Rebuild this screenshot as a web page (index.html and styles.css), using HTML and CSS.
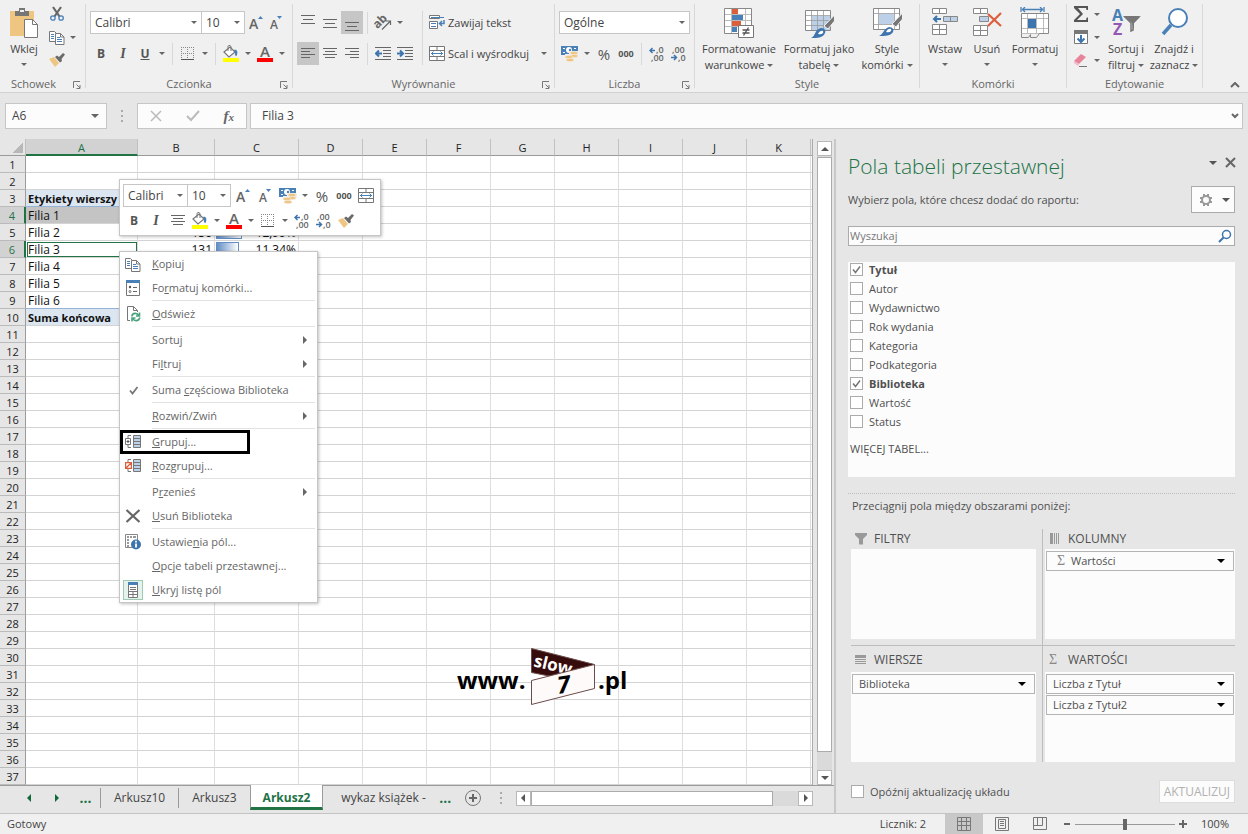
FILE: index.html
```html
<!DOCTYPE html>
<html lang="pl">
<head>
  <meta charset="UTF-8" />
  <meta name="viewport" content="width=device-width, initial-scale=1" />
  <title>Arkusz2 - tabela przestawna</title>
  <link rel="stylesheet" href="styles.css">
</head>
<body>

  <!-- Ikony -->
  <svg class="sprite" aria-hidden="true">
    <symbol id="i-paste" viewBox="0 0 30 32">
      <path fill="#efc681" d="M1 4h24v25H1z"/>
      <path fill="#777" d="M6 9V4h4V1h6v3h4v5z"/><path fill="#f0f0f0" d="M11 3h4v2h-4z"/>
      <path fill="#fff" stroke="#777" d="M15.500 12.500h8l5 5v13h-13z"/><path fill="none" stroke="#777" d="M23.500 12.500v5h5"/>
    </symbol>
    <symbol id="i-cut" viewBox="0 0 14 16">
      <path stroke="#666" stroke-width="2.200" fill="none" d="M3 1l6.500 9.500M11 1L4.500 10.500"/>
      <g fill="none" stroke="#4a80b8" stroke-width="1.300"><circle cx="2.900" cy="12" r="2.200"/><circle cx="11.100" cy="12" r="2.200"/></g>
    </symbol>
    <symbol id="i-copy" viewBox="0 0 16 15">
      <path fill="#fff" stroke="#777" d="M.5 1.500h5l3 3v7h-8z"/>
      <path stroke="#4a80b8" d="M2 4.500h3M2 6.500h3M2 8.500h3"/>
      <path fill="#fff" stroke="#777" d="M6.500 3.500h5l3.500 3.500v7.500H6.500z"/><path fill="none" stroke="#777" d="M11.500 3.500V7H15"/>
      <path stroke="#4a80b8" d="M8 7.500h3M8 9.500h5M8 11.500h5"/>
    </symbol>
    <symbol id="i-brush" viewBox="0 0 16 14">
      <path fill="#efc681" d="M0 6l5-2 5 6-4 4z"/>
      <path fill="#6a6a6a" d="M6 4l2-1.500 2 1.500L14 0l2 1.500-3.500 4.500L13 8l-2 1.500z"/>
    </symbol>
    <symbol id="i-border" viewBox="0 0 14 14">
      <path stroke="#888" stroke-dasharray="1 1" fill="none" d="M0 .5h14M0 6.500h14M.5 0v13M6.500 0v13M12.500 0v13"/><path stroke="#555" d="M0 12.500h13"/>
    </symbol>
    <symbol id="i-fill" viewBox="0 0 18 17">
      <path fill="#fff" stroke="#777" stroke-width="1.200" d="M2 7l6-5 5 5-6 5z"/><path fill="none" stroke="#777" d="M6 6V1.500C6 0 9 0 9 2v4"/>
      <path fill="#4a80b8" d="M12 5c3-1 4.500 2 2.500 6-1 0-2-1-1.500-3z"/><path fill="#ff0" d="M1 13h16v4H1z"/>
    </symbol>
    <symbol id="i-fontcolor" viewBox="0 0 18 17">
      <text x="9" y="12" text-anchor="middle" font-size="15" font-weight="600" fill="#666">A</text><path fill="#f00" d="M1 13h16v4H1z"/>
    </symbol>
    <symbol id="i-grow" viewBox="0 0 16 16">
      <text x="0" y="14" font-size="14" font-weight="600" fill="#666">A</text><path fill="#4a80b8" d="M9 4l2.500-3L14 4z"/>
    </symbol>
    <symbol id="i-shrink" viewBox="0 0 16 16">
      <text x="1" y="14" font-size="12" font-weight="600" fill="#666">A</text><path fill="#4a80b8" d="M8 1l2.500 3L13 1z"/>
    </symbol>
    <symbol id="i-vtop" viewBox="0 0 16 16"><path stroke="#666" d="M1 .5h14M3 4.500h10M1 8.500h14"/></symbol>
    <symbol id="i-vmid" viewBox="0 0 16 16"><path stroke="#666" d="M1 4.500h14M3 8.500h10M1 12.500h14"/></symbol>
    <symbol id="i-vbot" viewBox="0 0 16 16"><path stroke="#666" d="M1 7.500h14M3 11.500h10M1 15.500h14"/></symbol>
    <symbol id="i-left" viewBox="0 0 16 16"><path stroke="#666" d="M1 2.500h14M1 5.500h9M1 8.500h14M1 11.500h9"/></symbol>
    <symbol id="i-center" viewBox="0 0 16 16"><path stroke="#666" d="M1 2.500h14M3 5.500h10M1 8.500h14M3 11.500h10"/></symbol>
    <symbol id="i-right" viewBox="0 0 16 16"><path stroke="#666" d="M1 2.500h14M6 5.500h9M1 8.500h14M6 11.500h9"/></symbol>
    <symbol id="i-orient" viewBox="0 0 18 16">
      <text transform="rotate(-45 7 8)" x="0" y="10" font-size="12" font-weight="700" fill="#666">ab</text>
      <path stroke="#666" stroke-width="1.200" fill="none" d="M8 14.500l8-8M12 6H16.500v4"/>
    </symbol>
    <symbol id="i-outdent" viewBox="0 0 16 16">
      <path stroke="#666" d="M0 1.500h16M8 4.500h8M8 7.500h8M8 10.500h8M0 13.500h16"/><path stroke="#3d74ad" stroke-width="2" fill="none" d="M7 7.500H2M4 4.500l-3 3 3 3"/>
    </symbol>
    <symbol id="i-indent" viewBox="0 0 16 16">
      <path stroke="#666" d="M0 1.500h16M8 4.500h8M8 7.500h8M8 10.500h8M0 13.500h16"/><path stroke="#3d74ad" stroke-width="2" fill="none" d="M0 7.500h5M3 4.500l3 3-3 3"/>
    </symbol>
    <symbol id="i-wrap" viewBox="0 0 16 16">
      <path fill="#fff" stroke="#777" d="M.5.500h10v3H.5zM.5 6.500h8v7h-8z"/><path stroke="#4a80b8" d="M2 2.500h13M2 8.500h5M2 11.500h5"/>
      <path stroke="#4a80b8" stroke-width="1.500" fill="none" d="M15 5v3.500h-4M13 6l-2.500 2.500L13 11"/>
    </symbol>
    <symbol id="i-merge" viewBox="0 0 16 16">
      <path fill="#fff" stroke="#777" d="M.5.500h15v14H.5zM.5 4.500h15M.5 10.500h15M8 .5v4M8 10.500v4"/>
      <path stroke="#4a80b8" fill="none" d="M2 7.500h12M4.500 5.500l-2 2 2 2M11.500 5.500l2 2-2 2"/>
    </symbol>
    <symbol id="i-money" viewBox="0 0 18 17">
      <path fill="#4a80b8" d="M0 1h17v9H0z"/><path fill="#fff" d="M2 3h2v1H2zM13 3h2v1h-2zM2 7h2v1H2z"/><circle cx="8" cy="5" r="3" fill="#fff"/><circle cx="9" cy="5" r="1.200" fill="#4a80b8"/>
      <path fill="#f0f0f0" d="M8 6h10v5H8zM4 9h10v2H4z"/>
      <g fill="#efc681" stroke="#f0f0f0" stroke-width=".6"><ellipse cx="13" cy="8" rx="4" ry="1.700"/><ellipse cx="13" cy="11" rx="4" ry="1.700"/><ellipse cx="8" cy="12" rx="4" ry="1.700"/><ellipse cx="9" cy="15" rx="4" ry="1.700"/></g>
    </symbol>
    <symbol id="i-decinc" viewBox="0 0 16 16">
      <text x="7" y="7" font-size="9" font-weight="600" fill="#666">,0</text><text x="2" y="15" font-size="9" font-weight="600" fill="#666">,00</text>
      <path stroke="#3d74ad" stroke-width="1.500" fill="none" d="M6 4.500H1M3.500 2L1 4.500 3.500 7"/>
    </symbol>
    <symbol id="i-decdec" viewBox="0 0 16 16">
      <text x="1" y="7" font-size="9" font-weight="600" fill="#666">,00</text><text x="7" y="15" font-size="9" font-weight="600" fill="#666">,0</text>
      <path stroke="#3d74ad" stroke-width="1.500" fill="none" d="M0 11.500h5M3 9l2.500 2.500L3 14"/>
    </symbol>
    <symbol id="i-cond" viewBox="0 0 32 32">
      <path fill="#fff" stroke="#888" d="M1.500 1.500h27v25h-27z"/><path stroke="#bbb" d="M2 7.500h26M2 13.500h26M2 19.500h26M8.500 2v24M22.500 2v24"/>
      <path fill="#dc5f3d" d="M9 2h6v5H9zM9 14h9v5H9z"/><path fill="#4a80b8" d="M9 8h11v5H9zM9 20h5v5H9z"/>
      <path fill="#fff" stroke="#777" d="M15.500 18.500h15v12h-15z"/><path stroke="#555" stroke-width="1.300" fill="none" d="M19.500 23h7M19.500 26h7M25.500 20.500l-5 8"/>
    </symbol>
    <symbol id="i-astable" viewBox="0 0 32 32">
      <path fill="#fff" stroke="#888" d="M2.500 3.500h25v20h-25z"/><path fill="#bcd0e8" d="M9 9h18v14H9z"/>
      <path stroke="#999" stroke-width=".8" d="M3 8.500h24M3 13.500h24M3 18.500h24M8.500 4v19M14.500 4v19M20.500 4v19"/>
      <path fill="#777" stroke="#f0f0f0" d="M31.500 8v6L25 22l-4-3z"/><path fill="#3d74ad" d="M8 31c4-1 4-9 10-10 4 0 5 3 4 5-2 5-8 5-14 5z"/><path fill="#fff" d="M15 27c1-3 4-4 5-3 1 2-1 4-5 3z"/>
    </symbol>
    <symbol id="i-cellstyle" viewBox="0 0 32 32">
      <path fill="#fff" stroke="#888" d="M2.500 1.500h26v21h-26z"/><path stroke="#999" stroke-width=".8" d="M3 6.500h25M3 17.500h25M7.500 2v20M23.500 2v20"/><path fill="#bcd0e8" d="M8 7h15v10H8z"/>
      <path fill="#777" stroke="#f0f0f0" d="M31.500 6v6L25 20l-4-3z"/><path fill="#3d74ad" d="M8 29c4-1 5-8 10-9 4 0 5 3 4 5-2 4-8 4-14 4z"/><path fill="#fff" d="M15 25c1-3 4-4 5-3 1 2-1 4-5 3z"/>
    </symbol>
    <symbol id="i-insert" viewBox="0 0 32 32">
      <path fill="#fff" stroke="#888" d="M3.500 1.500h14v5h-14zM10.500 1.500v5M3.500 17.500h14v10h-14zM10.500 17.500v10M3.500 22.500h14"/>
      <path fill="#bcd0e8" stroke="#888" d="M14.500 9.500h14v5h-14zM21.500 9.500v5"/><path stroke="#3d74ad" stroke-width="2" fill="none" d="M12 12H5M8 9l-3 3 3 3"/>
    </symbol>
    <symbol id="i-delete" viewBox="0 0 32 32">
      <path fill="#fff" stroke="#888" d="M2.500 1.500h14v5h-14zM9.500 1.500v5M2.500 18.500h14v10h-14zM9.500 18.500v10M2.500 23.500h14"/>
      <path fill="#bcd0e8" stroke="#888" d="M8.500 9.500h9v5h-9z"/><path stroke="#dc5f3d" stroke-width="2.200" d="M17 7l13 12M30 6L17 19"/>
    </symbol>
    <symbol id="i-format" viewBox="0 0 32 32">
      <path stroke="#4a80b8" stroke-width="1.300" fill="none" d="M2 0v5M25 0v5M3 2.500h21M6 0L3.500 2.500 6 5M21 0l2.500 2.500L21 5"/>
      <path fill="#fff" stroke="#888" d="M2.500 6.500h27v20h-27z"/><path stroke="#aaa" stroke-width=".8" d="M3 11.500h26M3 21.500h26M8.500 7v19M17.500 7v19M24.500 7v19"/>
      <path fill="#3d74ad" d="M9 12h8v9H9z"/><path fill="#f0f0f0" stroke="#888" d="M2.500 26.500v4h7l2-3v3h6l3-4"/>
    </symbol>
    <symbol id="i-sum" viewBox="0 0 16 16"><path fill="#555" d="M1 0h14v4h-1.500L13 2H5l5 6-6 6h9l.8-2.500H15V16H1v-2l6-6-6-6z"/></symbol>
    <symbol id="i-filldown" viewBox="0 0 16 16">
      <path fill="#fff" stroke="#777" d="M1.500 1.500h13v13h-13z"/><path fill="#777" d="M1 1h14v4H1z"/><path stroke="#3d74ad" stroke-width="2" fill="none" d="M8 6v7M4.500 9.500L8 13l3.500-3.500"/>
    </symbol>
    <symbol id="i-eraser" viewBox="0 0 16 14"><path fill="#e8849a" d="M1 8l7-7 5 3-7 7z"/><path fill="#f3b9c5" d="M1 8l5 3-1 2-4-3z"/><path stroke="#777" d="M6 13.500h8"/></symbol>
    <symbol id="i-sort" viewBox="0 0 32 32">
      <text x="2" y="14" font-size="16" font-weight="700" fill="#4a80b8">A</text><text x="3" y="28" font-size="16" font-weight="700" fill="#9457b4">Z</text>
      <path fill="#f0f0f0" stroke="#777" stroke-width="1.500" d="M15 10h14l-6 6v7l-2 1v-8z"/><path fill="#777" d="M13 9h17l-6 7v8l-2-8z"/>
    </symbol>
    <symbol id="i-find" viewBox="0 0 32 32"><circle cx="20" cy="11" r="9" fill="#fff" stroke="#4a80b8" stroke-width="2"/><path stroke="#4a80b8" stroke-width="3.500" d="M13 18l-8 9"/></symbol>
    <symbol id="i-launch" viewBox="0 0 8 8"><path stroke="#777" fill="none" d="M.5 7V.5H7M7 4v3.500H3.500M3.500 3.500L7 7"/></symbol>
    <symbol id="i-search" viewBox="0 0 14 14"><circle cx="8.500" cy="5.500" r="4" fill="#fff" stroke="#3d74ad" stroke-width="1.500"/><path stroke="#3d74ad" stroke-width="2" d="M5.500 8.500L1 13"/></symbol>
    <symbol id="i-gear" viewBox="0 0 14 14"><circle cx="7" cy="7" r="4" fill="none" stroke="#999" stroke-width="2"/><path stroke="#999" stroke-width="2" d="M5 1v2.500M9 1v2.500M5 10.500V13M9 10.500V13M1 5h2.500M1 9h2.500M10.500 5H13M10.500 9H13"/></symbol>
    <symbol id="i-cellfmt" viewBox="0 0 16 16">
      <path fill="#fff" stroke="#777" d="M1.500 1.500h13v14h-13z"/><path fill="#4a80b8" d="M1 0h14v3H1z"/><circle cx="5" cy="7" r="1.200" fill="#555"/><circle cx="5" cy="11.500" r="1" fill="none" stroke="#555" stroke-width=".8"/><path stroke="#666" d="M8 7.500h4M8 11.500h4"/>
    </symbol>
    <symbol id="i-refresh" viewBox="0 0 16 16">
      <path fill="#fff" stroke="#777" d="M5 14.500H2.500V.5h6l4 4V6M8.500.5v4h4"/>
      <path fill="#fff" d="M6 7h9v8H6z"/>
      <path fill="none" stroke="#4ba47d" stroke-width="1.600" d="M6.800 10.500c.5-4 5.500-4 7-1M14.800 11.500c-1 4-5.500 4-7 1M14.500 6.500V10H11M7 15.500V12h3.500"/>
    </symbol>
    <symbol id="i-group" viewBox="0 0 16 14">
      <path fill="#fff" stroke="#777" d="M.5 3.500h5v6h-5zM3 3.500V.5h3M3 9.500v3h3"/><path stroke="#555" d="M1.500 6.500h3M3 5v3"/>
      <path fill="#bcd0e8" stroke="#777" d="M8.500.5h7v12h-7zM8.500 3.500h7M8.500 6.500h7M8.500 9.500h7"/>
    </symbol>
    <symbol id="i-ungroup" viewBox="0 0 16 14">
      <path fill="none" stroke="#777" d="M3 3V.5h3M3 10v2.500h3"/><path fill="#fff" stroke="#dc5f3d" stroke-width="1.300" d="M.6 3.600h5.800v5.800H.6zM1 9l5-5"/>
      <path fill="#bcd0e8" stroke="#777" d="M8.500.5h7v12h-7zM8.500 3.500h7M8.500 6.500h7M8.500 9.500h7"/>
    </symbol>
    <symbol id="i-cross" viewBox="0 0 16 14"><path stroke="#666" stroke-width="2.200" d="M1.500 1l13 12M14.500 1l-13 12"/></symbol>
    <symbol id="i-settings" viewBox="0 0 16 16">
      <path fill="#fff" stroke="#888" d="M.5.500h12v13H.5z"/><path stroke="#999" stroke-width="2" d="M2 3h2M5 3h2M8 3h3M2 6h2M2 9h2M2 12h2"/><circle cx="11" cy="10.500" r="5" fill="#3d74ad"/><path stroke="#fff" stroke-width="1.800" d="M11 9.500v4M11 6.800v1.600"/>
    </symbol>
    <symbol id="i-list" viewBox="0 0 16 16"><path fill="#fff" stroke="#777" d="M3.500.5h9v15h-9zM3.500 9.500h9M3.500 12.500h9M8 9.500v6"/><path fill="#4a80b8" d="M3 0h10v3H3z"/><path stroke="#777" d="M5 5.500h6M5 7.500h6"/></symbol>
    <symbol id="i-check" viewBox="0 0 12 12"><path fill="none" stroke="#777" stroke-width="1.800" d="M3 6.500l2.500 3 5-6.500"/></symbol>
    <symbol id="i-filter" viewBox="0 0 12 12"><path fill="#999" d="M0 0h12v2L8 6v5.500H4V6L0 2z"/></symbol>
    <symbol id="i-cols" viewBox="0 0 12 12"><path fill="#999" d="M1 0h3v11H1zM5 0h1v11H5zM7 0h1v11H7zM9 0h1v11H9z"/></symbol>
    <symbol id="i-rows" viewBox="0 0 12 12"><path fill="#999" d="M0 1h11v3H0zM0 5h11v1H0zM0 7h11v1H0zM0 9h11v1H0z"/></symbol>
  </svg>

  <!-- Wstążka -->
  <header class="ribbon">
    <section class="group clipboard">
      <div class="group-body">
        <button class="big paste"><svg width="30" height="32"><use href="#i-paste"/></svg><span>Wklej</span><i class="caret"></i></button>
        <div class="stack">
          <button class="tool" aria-label="Wytnij"><svg width="16" height="16"><use href="#i-cut"/></svg></button>
          <button class="tool" aria-label="Kopiuj"><svg width="16" height="15"><use href="#i-copy"/></svg><i class="caret"></i></button>
          <button class="tool" aria-label="Malarz formatów"><svg width="16" height="14"><use href="#i-brush"/></svg></button>
        </div>
      </div>
      <div class="group-name">Schowek<button class="launch" aria-label="Schowek - opcje"><svg width="8" height="8"><use href="#i-launch"/></svg></button></div>
    </section>

    <section class="group">
      <div class="group-body rows">
        <div class="row">
          <select class="combo font" aria-label="Czcionka"><option>Calibri</option></select>
          <select class="combo size" aria-label="Rozmiar czcionki"><option>10</option></select>
          <button class="btn grow" aria-label="Zwiększ"><svg width="16" height="16"><use href="#i-grow"/></svg></button>
          <button class="btn shrink" aria-label="Zmniejsz"><svg width="16" height="16"><use href="#i-shrink"/></svg></button>
        </div>
        <div class="row">
          <button class="btn"><b>B</b></button>
          <button class="btn"><em>I</em></button>
          <button class="btn"><u>U</u></button>
          <button class="drop" aria-label="Podkreślenie"><i class="caret"></i></button>
          <span class="vsep"></span>
          <button class="btn" aria-label="Obramowanie"><svg width="14" height="14"><use href="#i-border"/></svg></button>
          <button class="drop" aria-label="Rodzaj obramowania"><i class="caret"></i></button>
          <span class="vsep"></span>
          <button class="btn" aria-label="Wypełnienie"><svg width="18" height="17"><use href="#i-fill"/></svg></button>
          <button class="drop" aria-label="Kolor wypełnienia"><i class="caret"></i></button>
          <button class="btn" aria-label="Kolor"><svg width="18" height="17"><use href="#i-fontcolor"/></svg></button>
          <button class="drop" aria-label="Kolor czcionki"><i class="caret"></i></button>
        </div>
      </div>
      <div class="group-name">Czcionka<button class="launch" aria-label="Czcionka - opcje"><svg width="8" height="8"><use href="#i-launch"/></svg></button></div>
    </section>

    <section class="group">
      <div class="group-body split">
        <div class="rows">
          <div class="row">
            <button class="btn" aria-label="Do góry"><svg width="16" height="16"><use href="#i-vtop"/></svg></button>
            <button class="btn" aria-label="Do środka w pionie"><svg width="16" height="16"><use href="#i-vmid"/></svg></button>
            <button class="btn on" aria-label="Do dołu"><svg width="16" height="16"><use href="#i-vbot"/></svg></button>
            <span class="vsep"></span>
            <button class="btn" aria-label="Orientacja"><svg width="18" height="16"><use href="#i-orient"/></svg></button>
            <button class="drop" aria-label="Orientacja tekstu"><i class="caret"></i></button>
          </div>
          <div class="row">
            <button class="btn on" aria-label="Do lewej"><svg width="16" height="16"><use href="#i-left"/></svg></button>
            <button class="btn" aria-label="Do środka"><svg width="16" height="16"><use href="#i-center"/></svg></button>
            <button class="btn" aria-label="Do prawej"><svg width="16" height="16"><use href="#i-right"/></svg></button>
            <span class="vsep"></span>
            <button class="btn" aria-label="Zmniejsz wcięcie"><svg width="16" height="16"><use href="#i-outdent"/></svg></button>
            <button class="btn" aria-label="Zwiększ wcięcie"><svg width="16" height="16"><use href="#i-indent"/></svg></button>
          </div>
        </div>
        <div class="rows wide">
          <button class="labelled"><svg width="16" height="16"><use href="#i-wrap"/></svg>Zawijaj tekst</button>
          <button class="labelled"><svg width="16" height="16"><use href="#i-merge"/></svg>Scal i wyśrodkuj<i class="caret"></i></button>
        </div>
      </div>
      <div class="group-name">Wyrównanie<button class="launch" aria-label="Wyrównanie - opcje"><svg width="8" height="8"><use href="#i-launch"/></svg></button></div>
    </section>

    <section class="group">
      <div class="group-body rows">
        <div class="row"><select class="combo number" aria-label="Format liczb"><option>Ogólne</option></select></div>
        <div class="row">
          <button class="btn" aria-label="Waluta"><svg width="18" height="17"><use href="#i-money"/></svg></button>
          <button class="drop" aria-label="Format walutowy"><i class="caret"></i></button>
          <button class="btn pct">%</button>
          <button class="btn zeros">000</button>
          <span class="vsep"></span>
          <button class="btn" aria-label="Zwiększ dziesiętne"><svg width="16" height="16"><use href="#i-decinc"/></svg></button>
          <button class="btn" aria-label="Zmniejsz dziesiętne"><svg width="16" height="16"><use href="#i-decdec"/></svg></button>
        </div>
      </div>
      <div class="group-name">Liczba<button class="launch" aria-label="Liczba - opcje"><svg width="8" height="8"><use href="#i-launch"/></svg></button></div>
    </section>

    <section class="group">
      <div class="group-body">
        <button class="big w80"><svg width="32" height="32"><use href="#i-cond"/></svg><span>Formatowanie</span><span>warunkowe<i class="caret"></i></span></button>
        <button class="big w80"><svg width="32" height="32"><use href="#i-astable"/></svg><span>Formatuj jako</span><span>tabelę<i class="caret"></i></span></button>
        <button class="big w56"><svg width="32" height="32"><use href="#i-cellstyle"/></svg><span>Style</span><span>komórki<i class="caret"></i></span></button>
      </div>
      <div class="group-name">Style</div>
    </section>

    <section class="group">
      <div class="group-body">
        <button class="big w42"><svg width="32" height="32"><use href="#i-insert"/></svg><span>Wstaw</span><i class="caret"></i></button>
        <button class="big w42"><svg width="32" height="32"><use href="#i-delete"/></svg><span>Usuń</span><i class="caret"></i></button>
        <button class="big w54"><svg width="32" height="32"><use href="#i-format"/></svg><span>Formatuj</span><i class="caret"></i></button>
      </div>
      <div class="group-name">Komórki</div>
    </section>

    <section class="group">
      <div class="group-body">
        <div class="stack">
          <button class="tool" aria-label="Autosumowanie"><svg width="16" height="16"><use href="#i-sum"/></svg><i class="caret"></i></button>
          <button class="tool" aria-label="Wypełnij"><svg width="16" height="16"><use href="#i-filldown"/></svg><i class="caret"></i></button>
          <button class="tool" aria-label="Wyczyść"><svg width="16" height="14"><use href="#i-eraser"/></svg><i class="caret"></i></button>
        </div>
        <button class="big w48"><svg width="32" height="32"><use href="#i-sort"/></svg><span>Sortuj i</span><span>filtruj<i class="caret"></i></span></button>
        <button class="big w48"><svg width="32" height="32"><use href="#i-find"/></svg><span>Znajdź i</span><span>zaznacz<i class="caret"></i></span></button>
      </div>
      <div class="group-name">Edytowanie</div>
    </section>

    <button class="collapse" aria-label="Zwiń wstążkę"><svg width="10" height="6"><path fill="none" stroke="#666" stroke-width="2" d="M1 5l4-4 4 4"/></svg></button>
  </header>

  <!-- Pasek formuły -->
  <div class="formula-bar">
    <select class="combo name-box" aria-label="Pole nazwy"><option>A6</option></select>
    <span class="dots"></span>
    <div class="fx">
      <button aria-label="Anuluj"><svg width="12" height="12"><path stroke="#bbb" stroke-width="1.500" d="M1 1l10 10M11 1L1 11"/></svg></button>
      <button aria-label="Wpis"><svg width="14" height="12"><path fill="none" stroke="#bbb" stroke-width="2" d="M1 6l4 4 8-9"/></svg></button>
      <button class="fx-sign">f<small>x</small></button>
    </div>
    <div class="formula">
      <input type="text" value="Filia 3" aria-label="Formuła">
      <button aria-label="Rozwiń pasek formuły"><svg width="8" height="6"><path fill="none" stroke="#666" stroke-width="2" d="M1 1l3 3 3-3"/></svg></button>
    </div>
  </div>

  <main class="workspace">
    <section class="book">
      <div class="sheet">
        <table class="grid">
          <colgroup>
            <col class="c-head"><col class="c-a"><col class="c-b"><col class="c-c">
            <col class="c-n"><col class="c-n"><col class="c-n"><col class="c-n"><col class="c-n"><col class="c-n"><col class="c-n"><col class="c-n"><col>
          </colgroup>
          <thead>
            <tr><th class="corner"></th><th class="sel">A</th><th>B</th><th>C</th><th>D</th><th>E</th><th>F</th><th>G</th><th>H</th><th>I</th><th>J</th><th>K</th><th></th></tr>
          </thead>
          <tbody id="rows"></tbody>
        </table>

        <div class="vscroll">
          <button aria-label="W górę"><i class="tri up"></i></button>
          <span class="thumb"></span>
          <button aria-label="W dół"><i class="tri down"></i></button>
        </div>

        <svg class="watermark" width="174" height="60" viewBox="0 0 174 60">
          <text x="1" y="43" font-size="24" font-weight="700">www.</text>
          <path fill="#360b0b" stroke="#6b4b4b" d="M75.500 2.500l63 16-43 12-20-4z"/>
          <text transform="rotate(13 76 20)" x="77" y="20" font-size="17" font-weight="700" fill="#fff">slow</text>
          <path fill="#fffafa" stroke="#6b4b4b" d="M75.500 34.500l63-16v24l-63 16z"/>
          <text transform="rotate(-8 108 38)" x="101" y="47" font-size="24" font-weight="700" font-style="italic">7</text>
          <text x="142" y="43" font-size="24" font-weight="700">.pl</text>
        </svg>

        <!-- Minipasek narzędzi -->
        <div class="mini">
          <div class="row">
            <select class="combo mfont" aria-label="Czcionka"><option>Calibri</option></select>
            <select class="combo size" aria-label="Rozmiar"><option>10</option></select>
            <button class="btn grow" aria-label="Zwiększ"><svg width="16" height="16"><use href="#i-grow"/></svg></button>
            <button class="btn shrink" aria-label="Zmniejsz"><svg width="16" height="16"><use href="#i-shrink"/></svg></button>
            <button class="btn" aria-label="Waluta"><svg width="18" height="17"><use href="#i-money"/></svg></button>
            <button class="drop" aria-label="Format walutowy"><i class="caret"></i></button>
            <button class="btn pct">%</button>
            <button class="btn zeros">000</button>
            <button class="btn" aria-label="Scal"><svg width="16" height="16"><use href="#i-merge"/></svg></button>
          </div>
          <div class="row">
            <button class="btn"><b>B</b></button>
            <button class="btn"><em>I</em></button>
            <button class="btn" aria-label="Do środka"><svg width="16" height="16"><use href="#i-center"/></svg></button>
            <button class="btn" aria-label="Wypełnienie"><svg width="18" height="17"><use href="#i-fill"/></svg></button>
            <button class="drop" aria-label="Kolor wypełnienia"><i class="caret"></i></button>
            <button class="btn" aria-label="Kolor"><svg width="18" height="17"><use href="#i-fontcolor"/></svg></button>
            <button class="drop" aria-label="Kolor czcionki"><i class="caret"></i></button>
            <button class="btn" aria-label="Obramowanie"><svg width="14" height="14"><use href="#i-border"/></svg></button>
            <button class="drop" aria-label="Rodzaj obramowania"><i class="caret"></i></button>
            <button class="btn" aria-label="Zwiększ dziesiętne"><svg width="16" height="16"><use href="#i-decinc"/></svg></button>
            <button class="btn" aria-label="Zmniejsz dziesiętne"><svg width="16" height="16"><use href="#i-decdec"/></svg></button>
            <button class="btn" aria-label="Malarz formatów"><svg width="16" height="14"><use href="#i-brush"/></svg></button>
          </div>
        </div>

        <!-- Menu podręczne -->
        <div class="menu">
          <button><svg width="16" height="15"><use href="#i-copy"/></svg><span><u>K</u>opiuj</span></button>
          <button><svg width="16" height="16"><use href="#i-cellfmt"/></svg><span>Fo<u>r</u>matuj komórki...</span></button>
          <hr>
          <button><svg width="16" height="16"><use href="#i-refresh"/></svg><span><u>O</u>dśwież</span></button>
          <hr>
          <button class="sub"><span>Sortu<u>j</u></span></button>
          <button class="sub"><span>Fi<u>l</u>truj</span></button>
          <hr>
          <button><svg width="12" height="12"><use href="#i-check"/></svg><span>Suma <u>c</u>zęściowa Biblioteka</span></button>
          <hr>
          <button class="sub"><span><u>R</u>ozwiń/Zwiń</span></button>
          <hr>
          <button class="marked"><svg width="16" height="14"><use href="#i-group"/></svg><span><u>G</u>rupuj...</span></button>
          <button><svg width="16" height="14"><use href="#i-ungroup"/></svg><span><u>R</u>ozgrupuj...</span></button>
          <hr>
          <button class="sub"><span>P<u>r</u>zenieś</span></button>
          <button><svg width="16" height="14"><use href="#i-cross"/></svg><span><u>U</u>suń Biblioteka</span></button>
          <hr>
          <button><svg width="16" height="16"><use href="#i-settings"/></svg><span>Ustawie<u>n</u>ia pól...</span></button>
          <button><span><u>O</u>pcje tabeli przestawnej...</span></button>
          <button class="checked"><svg width="16" height="16"><use href="#i-list"/></svg><span><u>U</u>kryj listę pól</span></button>
        </div>
      </div>

      <nav class="tabs">
        <button class="arrow" aria-label="Poprzedni"><i class="tri left green"></i></button>
        <button class="arrow" aria-label="Następny"><i class="tri right green"></i></button>
        <button class="more">...</button>
        <button class="tab">Arkusz10</button>
        <button class="tab">Arkusz3</button>
        <button class="tab active">Arkusz2</button>
        <button class="tab last">wykaz książek -</button>
        <button class="more">...</button>
        <button class="add" aria-label="Nowy arkusz"><svg width="18" height="18"><circle cx="9" cy="9" r="7.500" fill="none" stroke="#777"/><path stroke="#666" stroke-width="2" d="M9 5v8M5 9h8"/></svg></button>
        <span class="dots"></span>
        <div class="hscroll">
          <button aria-label="W lewo"><i class="tri left"></i></button>
          <span class="thumb"></span>
          <button aria-label="W prawo"><i class="tri right"></i></button>
        </div>
      </nav>
    </section>

    <!-- Pola tabeli przestawnej -->
    <aside class="pane">
      <div class="pane-title">
        <h1>Pola tabeli przestawnej</h1>
        <button aria-label="Opcje okienka"><i class="tri down"></i></button>
        <button aria-label="Zamknij"><svg width="12" height="12"><path stroke="#666" stroke-width="2" d="M1 1l9 9M10 1l-9 9"/></svg></button>
      </div>
      <div class="pane-hint">
        <p>Wybierz pola, które chcesz dodać do raportu:</p>
        <button class="gear" aria-label="Narzędzia"><svg width="14" height="14"><use href="#i-gear"/></svg><i class="tri down"></i></button>
      </div>
      <label class="search"><input type="text" placeholder="Wyszukaj" aria-label="Wyszukaj"><svg width="14" height="14"><use href="#i-search"/></svg></label>
      <div class="fields">
        <label class="on"><input type="checkbox" checked>Tytuł</label>
        <label><input type="checkbox">Autor</label>
        <label><input type="checkbox">Wydawnictwo</label>
        <label><input type="checkbox">Rok wydania</label>
        <label><input type="checkbox">Kategoria</label>
        <label><input type="checkbox">Podkategoria</label>
        <label class="on"><input type="checkbox" checked>Biblioteka</label>
        <label><input type="checkbox">Wartość</label>
        <label><input type="checkbox">Status</label>
        <a href="#">WIĘCEJ TABEL...</a>
      </div>
      <p class="drag-hint">Przeciągnij pola między obszarami poniżej:</p>
      <div class="areas">
        <section class="area">
          <h2><svg width="12" height="12"><use href="#i-filter"/></svg>FILTRY</h2>
          <div class="well"></div>
        </section>
        <section class="area">
          <h2><svg width="12" height="12"><use href="#i-cols"/></svg>KOLUMNY</h2>
          <div class="well"><button class="pill"><span class="sigma">Σ</span>Wartości<i class="tri down"></i></button></div>
        </section>
        <section class="area">
          <h2><svg width="12" height="12"><use href="#i-rows"/></svg>WIERSZE</h2>
          <div class="well"><button class="pill">Biblioteka<i class="tri down"></i></button></div>
        </section>
        <section class="area">
          <h2><span class="sigma">Σ</span>WARTOŚCI</h2>
          <div class="well"><button class="pill">Liczba z Tytuł<i class="tri down"></i></button><button class="pill">Liczba z Tytuł2<i class="tri down"></i></button></div>
        </section>
      </div>
      <div class="pane-foot">
        <label><input type="checkbox">Opóźnij aktualizację układu</label>
        <button disabled>AKTUALIZUJ</button>
      </div>
    </aside>
  </main>

  <footer class="status">
    <span class="ready">Gotowy</span>
    <span class="count">Licznik: 2</span>
    <button class="view on" aria-label="Normalny"><svg width="14" height="14"><path fill="none" stroke="#777" d="M.5.500h13v13H.5zM.5 4.500h13M.5 8.500h13M4.500.5v13M9.500.5v13"/></svg></button>
    <button class="view" aria-label="Układ strony"><svg width="14" height="14"><path fill="none" stroke="#777" d="M.5.500h13v13H.5zM3.500 2.500h7v9h-7zM5 4.500h4M5 6.500h4M5 8.500h4"/></svg></button>
    <button class="view" aria-label="Podgląd podziału"><svg width="14" height="14"><path fill="none" stroke="#777" d="M.5.500h13v12H.5zM.5 8.500h9v-8M4.500.5v8"/></svg></button>
    <button class="zoom" aria-label="Pomniejsz"><svg width="8" height="8"><path stroke="#666" stroke-width="2" d="M1 4h6"/></svg></button>
    <input type="range" min="0" max="200" value="100" aria-label="Powiększenie">
    <button class="zoom" aria-label="Powiększ"><svg width="8" height="8"><path stroke="#666" stroke-width="2" d="M0 4h8M4 0v8"/></svg></button>
    <span class="percent">100%</span>
  </footer>

  <script>
    // Dane tabeli przestawnej: numer wiersza -> komórki A, B, C
    const data = {
      3: ['Etykiety wierszy'],
      4: ['Filia 1'],
      5: ['Filia 2', '150', '12,99%', 26],
      6: ['Filia 3', '131', '11,34%', 23],
      7: ['Filia 4'],
      8: ['Filia 5'],
      9: ['Filia 6'],
      10: ['Suma końcowa']
    };
    const selected = [4, 6];
    const rows = document.getElementById('rows');

    for (let n = 1; n <= 37; n++) {
      const d = data[n] || [];
      const tr = document.createElement('tr');
      tr.className = 'r' + n;
      let html = `<th class="${selected.includes(n) ? 'sel' : ''}">${n}</th>`;
      html += `<td>${d[0] || ''}</td><td class="num">${d[1] || ''}</td>`;
      html += d[2] ? `<td class="num bar"><i style="width:${d[3]}px"></i>${d[2]}</td>` : '<td></td>';
      html += '<td></td>'.repeat(9);
      tr.innerHTML = html;
      rows.appendChild(tr);
    }
  </script>
</body>
</html>
```

FILE: styles.css
```css
/* Ogólne */
*, *::before, *::after { box-sizing: border-box; }
body {
  margin: 0;
  min-height: 100vh;
  display: flex;
  flex-direction: column;
  background: #e6e6e6;
  color: #444;
  font: 11px/16px "Open Sans", "Noto Sans", sans-serif;
}
button, input, select {
  font: inherit;
  color: inherit;
  margin: 0;
}
button {
  padding: 0;
  border: 0;
  background: none;
}
p, h1, h2 { margin: 0; font-weight: 400; }
svg { flex: none; display: block; }
text { font-family: "Open Sans", "Noto Sans", sans-serif; }
.sprite { display: none; }

.caret {
  display: inline-block;
  flex: none;
  border: 3px solid transparent;
  border-top-color: #666;
  border-bottom: 0;
}
.tri {
  display: block;
  flex: none;
  border: 4px solid transparent;
}
.tri.down { border-top-color: #555; border-bottom: 0; }
.tri.up { border-bottom-color: #555; border-top: 0; }
.tri.left { border-right-color: #555; border-left: 0; }
.tri.right { border-left-color: #555; border-right: 0; }
.tri.left.green { border-right-color: #0e6b38; }
.tri.right.green { border-left-color: #0e6b38; }

.combo {
  appearance: none;
  height: 23px;
  padding: 0 4px;
  border: 1px solid #c6c6c6;
  border-radius: 0;
  background: #fff url("data:image/svg+xml,%3Csvg xmlns='http://www.w3.org/2000/svg' width='6' height='3'%3E%3Cpath fill='%23666' d='M0 0h6L3 3z'/%3E%3C/svg%3E") no-repeat right 4px center;
  font-size: 12px;
}

/* Wstążka */
.ribbon {
  display: flex;
  padding-top: 4px;
  height: 93px;
  background: #f0f0f0;
  border-bottom: 1px solid #d2d2d2;
}
.group {
  height: 84px;
  padding: 0 4px;
  border-right: 1px solid #d8d8d8;
}
.group-body { display: flex; height: 72px; }
.group-body.rows, .group-body.split { padding-top: 7px; }
.rows { display: flex; flex-direction: column; gap: 8px; }
.row { display: flex; align-items: center; height: 23px; }
.group-name {
  position: relative;
  text-align: center;
  color: #666;
}
.launch { position: absolute; right: 0; top: 5px; }

.big {
  display: flex;
  flex-direction: column;
  align-items: center;
  padding-top: 3px;
  white-space: nowrap;
}
.big svg { margin-bottom: 2px; }
.big > .caret { margin-top: 6px; }
.big span .caret { margin: 0 0 2px 3px; }
.paste { width: 40px; }
.w42 { width: 42px; }
.w48 { width: 48px; }
.w54 { width: 54px; }
.w56 { width: 56px; }
.w80 { width: 80px; }

.stack { display: flex; flex-direction: column; gap: 3px; width: 31px; }
.tool { display: flex; align-items: center; gap: 5px; height: 20px; padding-left: 2px; }
.clipboard .group-name { padding-right: 18px; }
.clipboard .stack { width: 37px; }
.clipboard .tool { padding-left: 5px; }

.btn {
  width: 22px;
  height: 23px;
  display: flex;
  align-items: center;
  justify-content: center;
  font-size: 12px;
  color: #555;
}
.btn em { font-family: "Liberation Serif", serif; font-weight: 700; font-size: 14px; }
.btn u { font-weight: 700; }
.btn.grow { margin-left: 2px; }
.ribbon .grow, .ribbon .shrink { width: 20px; }
.btn.on { background: #c6c6c6; }
.btn.pct { font-size: 15px; }
.btn.zeros { font-size: 9px; font-weight: 700; }
.drop { width: 12px; height: 23px; display: flex; align-items: center; justify-content: center; }
.vsep { width: 1px; height: 22px; margin: 0 4px; background: #d8d8d8; }
.combo.font { width: 112px; }
.combo.size { width: 44px; margin-left: -1px; }
.combo.number { width: 131px; }
.split { gap: 6px; }
.wide { width: 128px; height: 54px; padding: 0 3px 0 6px; border-left: 1px solid #d8d8d8; }
.labelled { display: flex; align-items: center; gap: 3px; height: 23px; white-space: nowrap; }
.labelled .caret { margin-left: auto; }
.collapse { margin: auto 8px 4px auto; }

/* Pasek formuły */
.formula-bar {
  display: flex;
  align-items: center;
  height: 46px;
  padding: 0 5px;
}
.formula-bar .combo {
  width: 102px;
  height: 26px;
  padding-left: 6px;
  background-color: #fcfcfc;
  background-position: right 7px center;
  background-size: 8px 4px;
}
.dots {
  width: 2px;
  height: 12px;
  background: repeating-linear-gradient(#aaa 0 2px, transparent 2px 5px);
}
.formula-bar .dots { margin: 0 14px; }
.fx, .formula {
  display: flex;
  align-items: center;
  height: 26px;
  border: 1px solid #c6c6c6;
  background: #fcfcfc;
}
.fx { width: 110px; justify-content: space-around; }
.fx-sign { font: italic 700 15px/20px "Liberation Serif", serif; color: #666; }
.fx-sign small { font-size: 11px; }
.formula { flex: 1; margin-left: 3px; padding: 0 3px 0 11px; }
.formula input { flex: 1; border: 0; padding: 0; background: none; font-size: 12px; }

/* Arkusz */
.workspace { display: flex; flex: 1; }
.book { flex: 1; min-width: 0; display: flex; flex-direction: column; }
.sheet { position: relative; display: flex; flex: 1; }
.grid {
  flex: 1;
  width: 100%;
  min-width: 0;
  table-layout: fixed;
  border-collapse: separate;
  border-spacing: 0;
  background: #fff;
  color: #111;
  border-right: 1px solid #ababab;
}
.c-head { width: 26px; }
.c-a { width: 112px; }
.c-b { width: 77px; }
.c-c { width: 84px; }
.c-n { width: 64px; }
.grid th, .grid td {
  height: 17px;
  padding: 2px 0 0;
  line-height: 14px;
  overflow: hidden;
  white-space: nowrap;
  border-right: 1px solid #dedede;
  border-bottom: 1px solid #d4d4d4;
}
.grid td { font-size: 12px; }
.grid th { background: #e6e6e6; font-weight: 400; color: #222; }
.grid thead th { border-color: #c0c0c0; border-bottom-color: #9b9b9b; }
.grid thead th.sel { background: #d2d2d2; color: #217346; border-bottom: 2px solid #217346; line-height: 13px; }
.grid tbody th { border-right-color: #9b9b9b; border-bottom-color: #bbb; }
.grid tbody th.sel { background: #d2d2d2; color: #217346; border-right: 2px solid #217346; }
.grid .corner { background: linear-gradient(135deg, transparent 50%, #b8b8b8 50%) no-repeat 13px 4px / 10px 10px #e6e6e6; }
.grid td:nth-child(2) { padding-left: 2px; }
.grid td:last-child, .grid th:last-child { border-right: 0; }
.grid .num { text-align: right; padding-right: 2px; }
.grid .bar { position: relative; }
.bar i {
  position: absolute;
  left: 1px;
  top: 1px;
  height: 14px;
  border: 1px solid #638ec6;
  background: linear-gradient(90deg, #638ec6, #fff);
}
.grid .r3 td:nth-child(2), .grid .r10 td:nth-child(2) {
  background: #dce6f1;
  font-size: 11px;
  font-weight: 700;
}
.grid .r3 td:nth-child(2), .grid .r9 td:nth-child(2) { border-bottom-color: #95b3d7; }
.grid .r4 td:nth-child(2) { background: #c4c4c4; }
.grid .r6 td:nth-child(2) { outline: 1px solid #217346; outline-offset: -2px; }

.vscroll, .hscroll { display: flex; }
.vscroll { flex: none; flex-direction: column; width: 15px; margin: 2px 2px 0 4px; background: #dadada; }
.vscroll button, .hscroll button {
  display: flex;
  align-items: center;
  justify-content: center;
  width: 15px;
  height: 15px;
  background: #fff;
  border: 1px solid #b8b8b8;
}
.thumb { background: #fff; border: 1px solid #ababab; }
.vscroll .thumb { flex: 1; margin: 1px 0 18px; }
.hscroll { flex: 1; background: #dadada; }
.hscroll .thumb { flex: 1; margin-right: 25px; }

.watermark { position: absolute; left: 456px; top: 507px; }

/* Minipasek */
.mini {
  position: absolute;
  left: 119px;
  top: 40px;
  padding: 3px 3px 2px;
  background: #fff;
  border: 1px solid #c6c6c6;
  box-shadow: 1px 1px 3px rgba(0, 0, 0, .25);
}
.mini .row { height: 25px; }
.mini .mfont { width: 65px; }

/* Menu podręczne */
.menu {
  position: absolute;
  left: 119px;
  top: 112px;
  width: 199px;
  background: #fff;
  border: 1px solid #c6c6c6;
  box-shadow: 1px 1px 3px rgba(0, 0, 0, .25);
}
.menu button {
  position: relative;
  display: grid;
  grid-template-columns: 26px 1fr 14px;
  column-gap: 6px;
  align-items: center;
  width: 100%;
  height: 24px;
  text-align: left;
  color: #666;
}
.menu svg { justify-self: center; }
.menu span { grid-column: 2; white-space: nowrap; }
.menu hr { margin: 0 2px 1px 32px; border: 0; border-top: 1px solid #e2e2e2; }
.menu .sub::after {
  content: "";
  width: 4px;
  border: 4px solid transparent;
  border-left-color: #666;
  border-right: 0;
}
.marked::before {
  content: "";
  position: absolute;
  left: 0;
  top: 0;
  width: 130px;
  height: 24px;
  border: 3px solid #000;
}
.menu .checked svg { width: 20px; height: 20px; padding: 1px; background: #e6f2ec; border: 1px solid #9fcbb5; }

/* Karty arkuszy */
.tabs {
  display: flex;
  align-items: center;
  height: 28px;
  padding: 0 21px 3px 15px;
  border-top: 1px solid #9b9b9b;
}
.arrow { width: 28px; display: flex; justify-content: center; }
.more { width: 29px; font-weight: 700; font-size: 14px; color: #217346; }
.tab {
  height: 20px;
  padding: 0 13px;
  border-left: 1px solid #9b9b9b;
  font-size: 12px;
  white-space: nowrap;
}
.tab.active {
  align-self: flex-start;
  height: 25px;
  margin-top: -1px;
  padding: 3px 12px 0;
  background: #fff;
  border-right: 1px solid #9b9b9b;
  border-bottom: 3px solid #217346;
  color: #217346;
  font-weight: 700;
}
.tab.last { border: 0; padding: 0 5px 0 18px; }
.tabs .add { margin: 0 18px 0 4px; }
.tabs .dots { margin-right: 14px; }

/* Panel pól */
.pane {
  flex: none;
  width: 414px;
  display: flex;
  flex-direction: column;
  padding: 14px 13px 10px 12px;
  border-left: 2px solid #c8c8c8;
  color: #505050;
}
.pane-title { display: flex; align-items: center; gap: 8px; height: 26px; margin-right: -2px; }
.pane-title h1 { flex: 1; font-size: 21px; line-height: 26px; font-weight: 300; color: #217346; }
.pane-title button { margin-bottom: 6px; }
.pane-hint { display: flex; align-items: center; justify-content: space-between; height: 27px; margin-top: 7px; }
.gear {
  display: flex;
  align-items: center;
  justify-content: center;
  gap: 9px;
  width: 44px;
  height: 27px;
  padding-left: 3px;
  background: #fcfcfc;
  border: 1px solid #ababab;
}
.search {
  display: flex;
  align-items: center;
  height: 20px;
  margin-top: 13px;
  padding-right: 2px;
  background: #fcfcfc;
  border: 1px solid #ababab;
}
.search input { flex: 1; padding: 0 0 0 1px; border: 0; background: none; }
.search input::placeholder { color: #777; }
.fields {
  flex: 1;
  display: flex;
  flex-direction: column;
  margin-top: 16px;
  padding-left: 2px;
  background: #fcfcfc;
}
.fields label, .pane-foot label { display: flex; align-items: center; gap: 6px; }
.fields label { align-items: flex-start; height: 19px; }
.fields label input { margin-top: 1px; }
.fields label.on { font-weight: 700; }
.fields a { margin-top: 8px; color: inherit; text-decoration: none; }
.pane input[type="checkbox"] {
  appearance: none;
  width: 13px;
  height: 13px;
  border: 1px solid #ababab;
  background: #fff;
}
.pane input[type="checkbox"]:checked {
  background: #fff url("data:image/svg+xml,%3Csvg xmlns='http://www.w3.org/2000/svg' width='11' height='11'%3E%3Cpath fill='none' stroke='%23777' stroke-width='1.500' d='M2 5.500l2.500 3L9 2.500'/%3E%3C/svg%3E") no-repeat center;
}
.drag-hint { margin-top: 16px; padding: 4px 4px 0; border-top: 1px dotted #bbb; }
.areas { display: grid; grid-template-columns: 191px 1fr; margin: 15px 0 0 3px; }
.area { padding-right: 6px; }
.area:nth-child(even) { padding: 0 0 0 2px; border-left: 1px solid #bdbdbd; }
.area:nth-child(-n+2) { padding-bottom: 6px; border-bottom: 1px solid #bdbdbd; }
.area h2 {
  display: flex;
  align-items: center;
  gap: 7px;
  height: 20px;
  padding-left: 4px;
  font-size: 12px;
}
.area:nth-child(n+3) h2 { height: 26px; padding-top: 2px; }
.sigma { width: 12px; font: 14px/16px "Liberation Serif", serif; color: #888; }
.pill .sigma { margin-left: 2px; }
.well { height: 90px; padding: 2px 1px; background: #fcfcfc; }
.pill {
  display: flex;
  align-items: center;
  gap: 4px;
  width: 100%;
  height: 20px;
  margin-bottom: 1px;
  padding: 0 8px 0 6px;
  border: 1px solid #b4b4b4;
}
.pill .tri { margin-left: auto; border-top-color: #000; }
.pane-foot {
  display: flex;
  align-items: center;
  justify-content: space-between;
  margin-top: 18px;
  padding-left: 3px;
}
.pane-foot button { height: 23px; padding: 0 4px; background: #fcfcfc; border: 1px solid #dcdcdc; color: #b1b1b1; font-size: 12px; }

/* Pasek stanu */
.status {
  display: flex;
  align-items: center;
  height: 21px;
  padding: 0 19px 0 7px;
  background: #f0f0f0;
  border-top: 1px solid #c3c3c3;
}
.count { margin: 0 19px 0 auto; }
.view { width: 38px; height: 20px; display: flex; align-items: center; justify-content: center; }
.view.on { background: #c8c8c8; }
.zoom { margin: 0 4px; }
.status input {
  appearance: none;
  width: 100px;
  height: 12px;
  background: linear-gradient(#999, #999) no-repeat center / 100% 1px;
}
.status input::-webkit-slider-thumb { appearance: none; width: 4px; height: 11px; background: #666; }
.percent { margin-left: 10px; }
```
